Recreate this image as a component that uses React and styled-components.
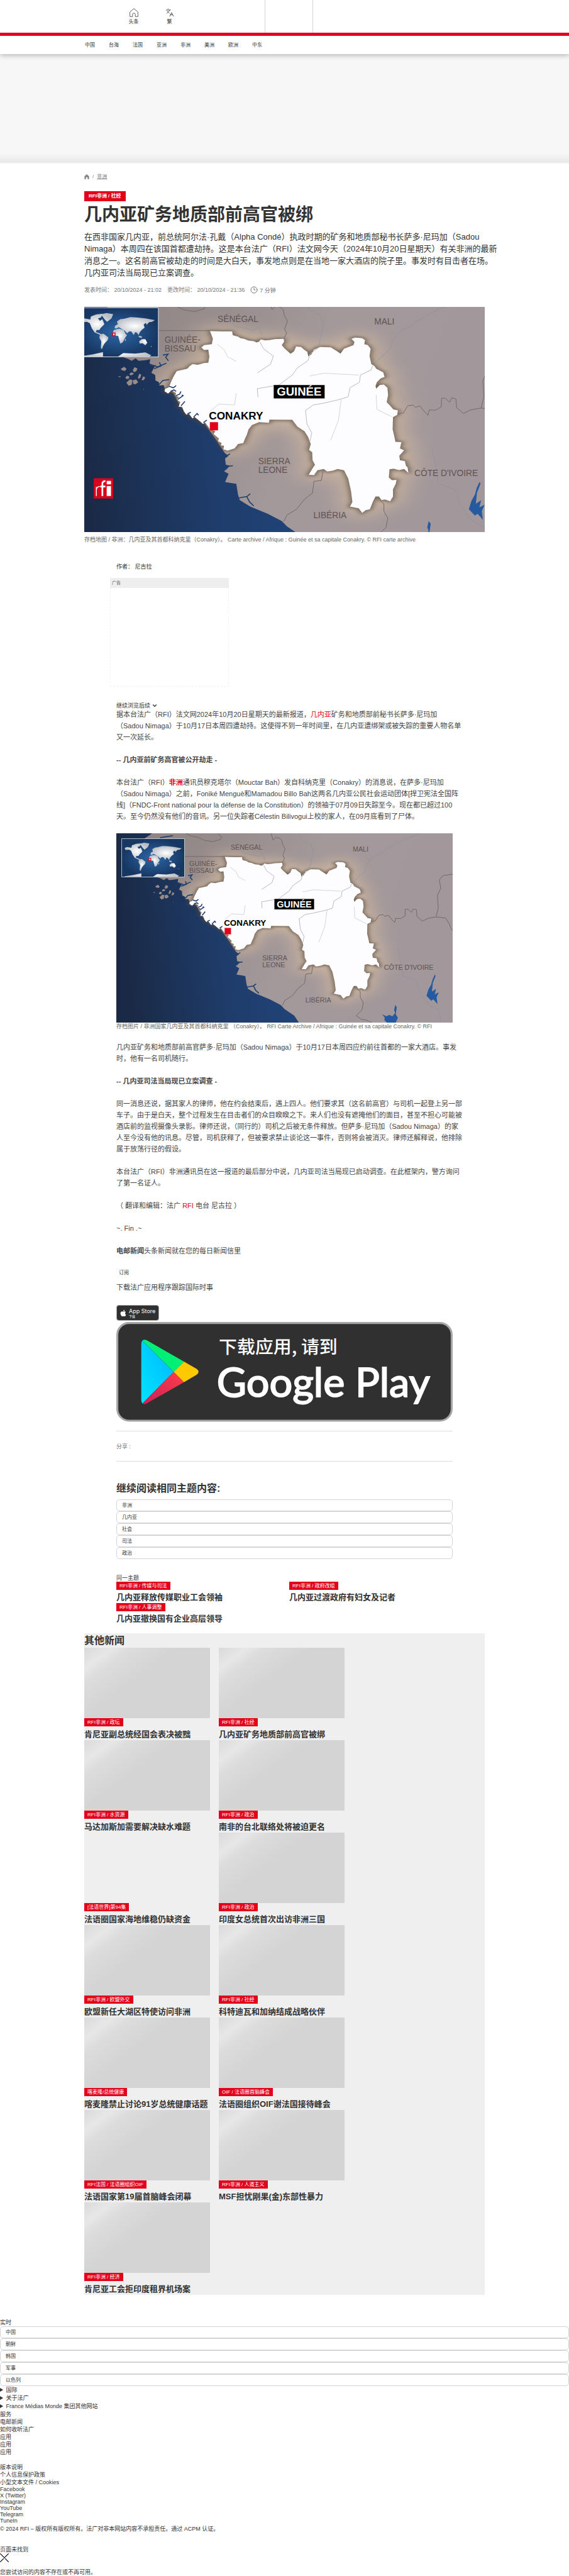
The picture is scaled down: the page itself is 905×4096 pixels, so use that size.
import React from "react";
import styled, { createGlobalStyle } from "styled-components";
import { Languages, Clock3, ChevronDown } from "lucide-react";
import { FaApple } from "react-icons/fa";

const GlobalStyle = createGlobalStyle`
  *, *::before, *::after { box-sizing: border-box; }
  body {
    margin: 0;
    background: #fff;
    color: #333;
    font-family: "Liberation Sans", "Noto Sans CJK SC", sans-serif;
    font-size: 9px;
    line-height: 12px;
    overflow-x: hidden;
  }
  h1, h2, h3, p, ul, figure { margin: 0; padding: 0; }
  ul { list-style: none; }
  a { color: inherit; text-decoration: none; }
  button { font-family: inherit; color: inherit; background: none; border: 0; padding: 0; cursor: pointer; }
`;

const RED = "#e2001a";

const Container = styled.div`
  max-width: 637px;
  margin: 0 auto;
`;

/* ---------- header ---------- */

const Header = styled.header`
  position: relative;
  z-index: 1;
  background: #fff;
  box-shadow: 0 2px 8px rgba(0, 0, 0, 0.28);
`;

const TopBar = styled.div`
  border-bottom: 5px solid ${RED};
`;

const TopInner = styled(Container)`
  display: grid;
  grid-template-columns: 287px 77px 1fr;
  height: 52px;
`;

const Shortcuts = styled.nav`
  display: flex;
  padding: 13px 0 0 50px;
`;

const Shortcut = styled.a`
  width: 57px;
  display: flex;
  flex-direction: column;
  align-items: center;
  gap: 2px;
  font-size: 8px;
  svg { display: block; }
`;

const PlayerSlot = styled.div`
  border: solid #d4d4d4;
  border-width: 0 1px;
`;

const SectionNav = styled(Container).attrs({ as: "nav" })`
  display: flex;
  align-items: center;
  gap: 22px;
  height: 29px;
  padding-left: 1px;
  font-size: 8px;
`;

const AdBanner = styled.div`
  height: 175px;
  background: linear-gradient(#f7f7f7, #f7f7f7 158px, #e9e9e9 172px, #fff);
`;

/* ---------- article head ---------- */

const Breadcrumb = styled.nav`
  display: flex;
  align-items: center;
  gap: 5px;
  padding-top: 14px;
  font-size: 8px;
  color: #777;
  a:last-child { text-decoration: underline; }
  svg { display: block; }
`;

const Tag = styled.a`
  display: block;
  width: fit-content;
  background: ${RED};
  color: #fff;
  font-size: 8px;
  line-height: 13px;
  padding: 0 5px;
  white-space: nowrap;
`;

const HeadTag = styled(Tag)`
  margin-top: 17px;
  padding: 0 7px;
  line-height: 16px;
  font-weight: 700;
`;

const Title = styled.h1`
  margin-top: 5px;
  font-size: 28px;
  line-height: 34px;
`;

const Lead = styled.p`
  margin: 8px -21px 0 0;
  font-size: 13px;
  line-height: 19px;
`;

const Meta = styled.div`
  display: flex;
  align-items: center;
  gap: 9px;
  margin-top: 11px;
  font-size: 9px;
  line-height: 14px;
  color: #777;
`;

const ReadingTime = styled.span`
  display: flex;
  align-items: flex-end;
  gap: 3px;
  line-height: 10px;
`;

const HeroFigure = styled.figure`
  margin-top: 20px;
  figcaption { margin-top: 6px; color: #666; }
`;

const BodyFigure = styled.figure`
  margin-top: 18px;
  figcaption { color: #666; white-space: nowrap; }
`;

const MapSvg = styled.svg`
  display: block;
  width: 100%;
  aspect-ratio: 16 / 9;
  font-family: "Liberation Sans", sans-serif;
`;

/* ---------- article body ---------- */

const Article = styled.div`
  margin: 31px 51px 0;
`;

const AdBox = styled.aside`
  width: 189px;
  height: 173px;
  margin: 12px 0 25px -10px;
  border: 1px dashed #f3f3f3;
`;

const AdLabel = styled.div`
  margin: -1px;
  padding: 2px 3px 0;
  height: 16px;
  background: #eee;
  font-size: 7px;
  color: #666;
`;

const ReadOn = styled.button`
  display: flex;
  align-items: center;
  gap: 2px;
  font-size: 9px;
  line-height: 10px;
`;

const Para = styled.p`
  margin: ${(p) => (p.$first ? "0" : "18px")} -17px 0 0;
  font-size: 11px;
  line-height: 18px;
  color: #444;
`;

const InlineLink = styled.a`
  color: ${RED};
`;

const Subscribe = styled.button`
  display: block;
  margin-top: 20px;
  padding: 0 4px;
  font-size: 8px;
  line-height: 12px;
`;

const AppText = styled(Para)`
  margin-top: 8px;
`;

const AppStoreLink = styled.a`
  width: 68px;
  height: 25px;
  margin-top: 19px;
  padding: 0 4px;
  display: flex;
  align-items: center;
  gap: 3px;
  border: 1px solid #a6a6a6;
  border-radius: 4px;
  background: #303030;
  color: #fff;
  font-family: Inter, "Noto Sans CJK SC", sans-serif;
  font-size: 9px;
  line-height: 10px;
  white-space: nowrap;
  svg { flex: none; }
  small { display: block; font-size: 5px; line-height: 6px; }
`;

const PlayLink = styled.a`
  display: block;
  margin-top: 2px;
  svg { display: block; width: 100%; }
`;

const Share = styled.div`
  margin-top: 14px;
  padding: 18px 0;
  border: solid #ddd;
  border-width: 1px 0;
  color: #777;
  height: 49px;
`;

const SectionTitle = styled.h2`
  font-size: 16px;
  line-height: ${(p) => p.$line || 20}px;
`;

const TopicHeading = styled(SectionTitle)`
  margin: 33px 0 7px;
`;

const Pill = styled.a`
  display: block;
  padding: 0 8px;
  border: 1px solid #d4d4d4;
  border-radius: 5px;
  font-size: 8px;
  line-height: 17px;
`;

const RelatedLabel = styled.p`
  && { margin-top: 24px; }
`;

const RelatedGrid = styled.ul`
  display: grid;
  grid-template-columns: 1fr 1fr;
  column-gap: 15px;
`;

const CardTitle = styled.h3`
  padding-top: ${(p) => p.$pad}px;
  font-size: 13px;
  line-height: 18px;
  white-space: nowrap;
`;

const OtherNews = styled.section`
  margin-top: 14px;
  background: #efefef;
`;

const NewsGrid = styled.ul`
  display: grid;
  grid-template-columns: repeat(2, 200px);
  column-gap: 14px;
`;

const Thumb = styled.div`
  height: 112px;
  background: ${(p) =>
    p.$empty ? "none" : "linear-gradient(143deg, #dadada, #e7e7e7 13%, #dcdcdc 22%, #d4d4d4 42%)"};
`;

/* ---------- footer ---------- */

const Footer = styled.footer`
  margin-top: 38px;
`;

const Fold = styled.details`
  line-height: 13px;
`;

const LinkList = styled.ul`
  margin-top: ${(p) => p.$top || 0}px;
  line-height: ${(p) => p.$line || 12}px;
`;

const Copyright = styled.p`
  && { margin-top: 2px; }
`;

const NotFound = styled.section`
  margin-top: 21px;
  button { display: block; height: 14px; }
  button svg { display: block; }
  p:last-child { margin-top: 11px; line-height: 10px; }
`;

/* ---------- drawings ---------- */

function GuineaMap({ id, viewBox, logo }) {
  const guinea =
    "M565 248L600 250L628 250L630 270L645 278L652 287L662 290L675 300L690 303L698 310L705 306L710 294L722 299L735 297L750 292L775 290L777 305L770 325L779 345L785 355L795 373L805 360L811 333L825 335L835 352L843 362L846 387L855 375L862 350L880 335L910 337L925 355L938 372L948 345L975 325L978 308L969 290L980 283L1000 287L1008 297L1006 320L1016 325L1024 345L1021 385L1026 430L1035 440L1040 455L1060 475L1064 500L1052 510L1042 530L1038 550L1040 565L1050 545L1062 543L1072 560L1074 600L1070 640L1080 660L1089 680L1102 685L1100 710L1088 722L1087 790L1092 830L1095 858L1112 860L1108 895L1120 905L1106 935L1108 960L1122 965L1125 990L1130 1000L1132 1030L1120 1008L1105 1014L1090 1006L1078 1010L1076 1055L1085 1070L1098 1068L1096 1090L1088 1120L1088 1160L1080 1186L1065 1176L1055 1179L1048 1160L1038 1160L1030 1190L1022 1230L1010 1235L1000 1250L990 1225L965 1215L972 1190L968 1130L960 1060L948 1015L930 1008L915 1018L900 1022L890 1008L872 1015L862 1042L847 1040L858 1005L865 985L858 960L857 915L848 903L853 870L845 830L835 800L815 775L800 737L735 736L733 753L705 750L685 765L675 790L670 820L665 840L660 865L645 870L635 895L615 907L603 900L605 880L596 878L598 865L588 855L590 840L575 815L580 800L565 788L550 750L545 760L530 735L520 720L515 730L505 705L497 708L490 690L485 665L475 665L480 640L470 625L476 610L465 605L468 590L455 575L445 592L435 580L436 567L447 558L455 520L463 490L470 468L485 462L500 455L507 440L515 430L530 433L548 424L560 422L563 390L560 350L548 352L540 338L548 325L570 320L573 290Z";
  const sea =
    "M167 81H298L288 95L270 118V392L317 392L330 400L341 412L352 398L361 412L380 408L394 403L392 426L404 440L410 432L402 459L397 478L408 490L409 520L419 530L419 548L432 545L436 567L460 590L470 625L480 665L505 705L550 760L565 800L580 840L600 900L607 920L618 935L608 950L610 985L622 990L612 1010L605 1020L618 1035L608 1080L625 1085L640 1090L645 1150L650 1180L680 1215L730 1255L770 1295L785 1325L820 1370L837 1420H167Z";
  return (
    <MapSvg viewBox={viewBox} preserveAspectRatio="none" role="img" aria-label="Guinée">
      <defs>
        <linearGradient id={`${id}-sea`} x1="0" y1="0.1" x2="1" y2="0">
          <stop offset="0" stopColor="#1a2a46" />
          <stop offset="0.55" stopColor="#1f3d6c" />
          <stop offset="1" stopColor="#21457a" />
        </linearGradient>
        <linearGradient id={`${id}-land`} x1="0" y1="0" x2="1" y2="0.2">
          <stop offset="0" stopColor="#8b807e" />
          <stop offset="0.6" stopColor="#a3989a" />
          <stop offset="1" stopColor="#a2979b" />
        </linearGradient>
        <radialGradient id={`${id}-world`}>
          <stop offset="0" stopColor="#2c68a8" />
          <stop offset="1" stopColor="#173763" />
        </radialGradient>
        <radialGradient id={`${id}-cont`}>
          <stop offset="0" stopColor="#fff" />
          <stop offset="1" stopColor="#b9bfc6" />
        </radialGradient>
        <filter id={`${id}-glow`} x="-30%" y="-30%" width="160%" height="160%">
          <feGaussianBlur stdDeviation="38" />
        </filter>
        <filter id={`${id}-edge`} x="-10%" y="-10%" width="120%" height="120%">
          <feGaussianBlur stdDeviation="8" />
        </filter>
        <clipPath id={`${id}-box`}>
          <rect x="41" y="41" width="476" height="290" />
        </clipPath>
      </defs>
      <rect width="1000" height="563" fill={`url(#${id}-land)`} />
      <g transform="scale(.8104 .4201) translate(-167 -81)">
        <path d={guinea} fill="#cfb89f" stroke="#cfb89f" strokeWidth="50" filter={`url(#${id}-glow)`} opacity="0.9" />
        <path d={sea} fill={`url(#${id}-sea)`} />
        <path d={guinea} fill="#54483f" stroke="#54483f" strokeWidth="12" filter={`url(#${id}-edge)`} opacity="0.7" />
        <path d={guinea} fill="#fdfcfe" />
        <g fill="none" stroke="#75696a" strokeWidth="1" strokeLinejoin="round">
          <path vectorEffect="non-scaling-stroke" d="M418 245H565M423 81L440 100L470 112L490 130L520 140L548 125L553 105L540 85M735 81L742 130L752 110L765 115L774 130L778 165L786 190L783 210L778 235L784 260L776 290" />
          <path vectorEffect="non-scaling-stroke" d="M1102 706L1118 698L1130 660L1145 655L1152 668L1165 660L1175 685L1188 712L1192 682L1210 684L1226 665L1227 618L1238 618L1250 640L1256 615L1268 622L1270 670L1290 702L1310 682L1340 672L1375 680L1388 720L1393 745L1401 770M1340 672L1348 610L1345 520L1357 470L1352 410L1365 380L1401 370" />
          <path vectorEffect="non-scaling-stroke" d="M888 1020L883 1072L862 1076L858 1140L835 1175L812 1230L785 1262L776 1297M1050 1180L1062 1200L1062 1240L1073 1280L1068 1330L1047 1370L1065 1395L1085 1402L1105 1420" />
        </g>
        <g fill="none" stroke="#8d929c" strokeWidth="1" opacity="0.7">
          <path vectorEffect="non-scaling-stroke" d="M1280 81L1260 100L1225 122L1180 165L1160 190L1135 225L1110 245L1090 290L1078 350L1055 390L1035 430M835 81L850 130L880 160L890 210L880 290L876 330M545 85L580 130L610 145L635 220L690 245L705 225L712 270M1200 890L1210 990L1218 1090L1265 1120L1280 1200L1310 1290L1350 1330L1358 1420" />
        </g>
        <g fill="none" stroke="#b6bcc4" strokeWidth="1">
          <path vectorEffect="non-scaling-stroke" d="M708 308L718 345L735 370L746 385L738 430L700 478M878 335L850 375L845 410L815 450L800 490L762 545L700 565L702 612M1030 440L1025 462L995 490L992 530L965 560L960 610L935 625L890 645L860 655L838 685L842 760L856 810L850 860" />
          <path vectorEffect="non-scaling-stroke" opacity="0.6" d="M585 320L605 350L615 390L640 415M850 495L890 480L990 490M940 625L932 740L910 850M565 690L590 650L635 655L640 590M1040 600L1042 680L1085 720" />
        </g>
        <g fill="none" stroke="#203f6d" strokeWidth="1.6">
          <path vectorEffect="non-scaling-stroke" d="M448 552L460 560L468 548M452 580L462 572L468 580M466 605L478 595L482 580M472 625L488 604L484 600M482 660L493 635M500 705L510 695M518 722L528 702L532 712M546 752L556 738M392 430L415 445L440 425M405 455L425 440L420 420M430 380L445 375L438 392L446 412M418 545L430 520L448 515M612 935L622 925M610 995L630 990M640 1170L670 1160L680 1145M670 1160L678 1190L690 1212M327 112L350 105L375 98" />
        </g>
        <g fill="#265aa0">
          <path d="M1336 1078L1328 1110L1322 1150L1312 1185L1305 1230L1322 1265L1330 1255L1345 1288L1342 1240L1350 1205L1335 1220L1340 1180L1325 1200L1328 1140L1338 1090Z" />
          <path d="M1190 1295L1186 1330L1190 1350L1180 1375L1168 1365L1158 1375L1142 1360L1152 1385L1150 1400L1160 1420H1192L1200 1385L1192 1360L1196 1310Z" />
        </g>
      </g>
      <g transform="scale(.392)">
        <path fill="#978b89" d="M295 402l20-12 14 12-8 12-20-4zM322 452l12-10 12 6-4 12-14 2zM345 432l14-10 14 8-10 8-12 2zM366 410l10-18 18 8-6 14-14 8zM396 455l8-24 12 4-4 16-10 10zM418 470l8-24 14 6-8 16zM328 484l20-20 16 4-4 28-18 6zM366 470l20-6 12 18-18 12-12-4zM282 445h12v5h-12zM428 520l5 2-3 4z" />
        <g clipPath={`url(#${id}-box)`}>
          <rect x="41" y="41" width="478" height="291" fill={`url(#${id}-world)`} />
          <g fill={`url(#${id}-cont)`}>
            <path d="M62 112L80 104L115 110L118 92L150 80L188 76L178 98L160 104L172 118L186 108L198 138L186 150L176 160L168 172L152 172L148 184L170 192L182 198L176 202L140 186L124 162L112 132L96 124L70 126ZM178 80L210 72L250 78L240 104L214 124L202 112Z" />
            <path d="M172 200L192 194L222 216L218 232L200 250L190 268L184 286L177 278L180 240L168 218Z" />
            <path d="M254 172L284 164L312 172L324 196L332 202L318 222L306 246L292 252L286 232L280 208L258 206L246 192ZM318 228l8-4-4 16z" />
            <path d="M258 160L262 146L278 138L272 122L292 108L312 106L352 96L388 98L440 104L496 114L480 124L462 126L448 142L444 130L430 140L436 158L420 170L408 184L400 202L390 188L380 184L372 202L358 182L346 180L332 192L318 176L300 166L284 156L266 164Z" />
            <path d="M404 238L420 226L440 226L452 248L440 262L424 250L406 252ZM400 206l20 4-2 10-16-6zM470 272l8-8-2 8z" />
            <path d="M62 326L130 316L190 302V330H62ZM280 328L310 308L380 312L440 304L476 322L460 332H290Z" />
          </g>
        </g>
        <rect x="41" y="41" width="476" height="290" fill="none" stroke="#ccd3da" strokeWidth="4" />
        <rect x="247" y="190" width="14" height="16" fill="#fff" stroke="#e2001a" strokeWidth="6" />
      </g>
      <g fill="#5f5453" fontSize="20">
        <text x="340" y="49">SÉNÉGAL</text>
        <text x="703" y="55">MALI</text>
        <text x="217" y="97">GUINÉE-</text>
        <text x="217" y="117">BISSAU</text>
        <text x="434" y="378">SIERRA</text>
        <text x="434" y="398">LEONE</text>
        <text x="562" y="503">LIBÉRIA</text>
        <text x="796" y="406">CÔTE D'IVOIRE</text>
      </g>
      <rect x="470" y="195" width="118" height="31" fill="#000" />
      <text x="529" y="220" fontSize="27" fontWeight="700" fill="#fff" textAnchor="middle">GUINÉE</text>
      <text x="320" y="275" fontSize="25" fontWeight="700" fill="#000">CONAKRY</text>
      <rect x="322" y="281" width="19" height="19" fill="#e2001a" />
      {logo && (
        <g>
          <rect x="53" y="411" width="45" height="47" fill="#d8061c" />
          <path d="M59 452V431M59 438Q60 430 67 430" stroke="#fff" strokeWidth="2" fill="none" />
          <path d="M73 452V424Q73 417 80 418M68 430H80" stroke="#fff" strokeWidth="4" fill="none" />
          <rect x="83" y="417" width="10" height="8" fill="#fff" />
          <rect x="83" y="429" width="10" height="23" fill="#fff" />
        </g>
      )}
    </MapSvg>
  );
}

function PlayBadge() {
  return (
    <svg viewBox="0 0 850 252" role="img" aria-label="Google Play">
      <defs>
        <linearGradient id="play-blue" x1="1" y1="0" x2="0" y2="1">
          <stop offset="0" stopColor="#00b4ff" />
          <stop offset="1" stopColor="#00e5ff" />
        </linearGradient>
        <linearGradient id="play-red" x1="1" y1="0" x2="0" y2="1">
          <stop offset="0" stopColor="#ff3d47" />
          <stop offset="1" stopColor="#c8215a" />
        </linearGradient>
      </defs>
      <rect x="2.5" y="2.5" width="845" height="247" rx="30" fill="#303030" stroke="#a6a6a6" strokeWidth="5" />
      <path d="M66 47Q63 50 63 57V196Q63 203 66 206L145 126Z" fill="url(#play-blue)" />
      <path d="M171 100L78 47Q71 43 66 47L145 126Z" fill="#00f076" />
      <path d="M171 152L78 205Q71 210 66 206L145 126Z" fill="url(#play-red)" />
      <path d="M171 100L202 118Q214 126 202 134L171 152L145 126Z" fill="#ffc900" />
      <text x="259" y="80" fontSize="46" fontWeight="500" fill="#fff" fontFamily='"Noto Sans CJK SC", sans-serif'>
        下载应用, 请到
      </text>
      <text x="254" y="189" fontSize="103" fill="#fff" stroke="#fff" strokeWidth="3" fontFamily="Lato, sans-serif">
        Google Play
      </text>
    </svg>
  );
}

function HomeOutline() {
  return (
    <svg width="14" height="14" viewBox="0 0 22 22" fill="none" stroke="#333" strokeWidth="1.2">
      <path d="M1 9.500L11 1L21 9.500V21H14.500V15Q14.500 12.500 11 12.500T7.500 15V21H1Z" strokeLinejoin="round" />
    </svg>
  );
}

function CloseCross() {
  return (
    <svg width="14" height="14" viewBox="0 0 22 22" stroke="#000" strokeWidth="1.8" strokeLinecap="round">
      <path d="M1 1L21 21M21 1L1 21" />
    </svg>
  );
}

/* ---------- content ---------- */

const sections = ["中国", "台海", "法国", "亚洲", "非洲", "美洲", "欧洲", "中东"];
const topics = ["非洲", "几内亚", "社会", "司法", "政治"];
const live = ["中国", "朝鲜", "韩国", "军事", "以色列"];

const related = [
  ["RFI非洲 / 传媒与司法", "几内亚释放传媒职业工会领袖"],
  ["RFI非洲 / 政府改组", "几内亚过渡政府有妇女及记者"],
  ["RFI非洲 / 人事调整", "几内亚撤换国有企业高层领导"],
];

const news = [
  ["RFI非洲 / 政坛", "肯尼亚副总统经国会表决被黜"],
  ["RFI非洲 / 社经", "几内亚矿务地质部前高官被绑"],
  ["RFI非洲 / 水资源", "马达加斯加需要解决缺水难题"],
  ["RFI非洲 / 政治", "南非的台北联络处将被迫更名"],
  ["[法语世界]第94集", "法语圈国家海地维稳仍缺资金", true],
  ["RFI非洲 / 政治", "印度女总统首次出访非洲三国"],
  ["RFI非洲 / 欧盟外交", "欧盟新任大湖区特使访问非洲"],
  ["RFI非洲 / 社经", "科特迪瓦和加纳结成战略伙伴"],
  ["喀麦隆/总统健康", "喀麦隆禁止讨论91岁总统健康话题"],
  ["OIF / 法语圈首脑峰会", "法语圈组织OIF谢法国接待峰会"],
  ["RFI法国 / 法语圈组织OIF", "法语国家第19届首脑峰会闭幕"],
  ["RFI非洲 / 人道主义", "MSF担忧刚果(金)东部性暴力"],
  ["RFI非洲 / 经济", "肯尼亚工会拒印度租界机场案"],
];

const services = ["服务", "电邮新闻", "如何收听法广", "应用", "应用", "应用"];
const legal = ["版本说明", "个人信息保护政策", "小型文本文件 / Cookies"];
const social = ["Facebook", "X (Twitter)", "Instagram", "YouTube", "Telegram", "TuneIn"];

const Links = ({ items, ...rest }) => (
  <LinkList {...rest}>
    {items.map((t, i) => (
      <li key={i}><a href="#">{t}</a></li>
    ))}
  </LinkList>
);

const Pills = ({ items }) => (
  <ul>
    {items.map((t) => (
      <li key={t}><Pill href="#">{t}</Pill></li>
    ))}
  </ul>
);

export default function App() {
  return (
    <div lang="zh-CN">
      <GlobalStyle />
      <Header>
        <TopBar>
          <TopInner>
            <Shortcuts>
              <Shortcut href="#"><HomeOutline />头条</Shortcut>
              <Shortcut href="#"><Languages size={14} strokeWidth={1.4} />繁</Shortcut>
            </Shortcuts>
            <PlayerSlot />
          </TopInner>
        </TopBar>
        <SectionNav>
          {sections.map((s) => <a href="#" key={s}>{s}</a>)}
        </SectionNav>
      </Header>
      <AdBanner />

      <Container as="main">
        <Breadcrumb>
          <a href="#" aria-label="首页">
            <svg width="8" height="8" viewBox="0 0 11 12" fill="#888"><path d="M5.500 0L11 5V12H7.500V7.500H3.500V12H0V5Z" /></svg>
          </a>
          <span>/</span>
          <a href="#">非洲</a>
        </Breadcrumb>
        <HeadTag href="#">RFI非洲 / 社经</HeadTag>
        <Title>几内亚矿务地质部前高官被绑</Title>
        <Lead>
          在西非国家几内亚，前总统阿尔法·孔戴（Alpha Condé）执政时期的矿务和地质部秘书长萨多·尼玛加（Sadou Nimaga）本周四在该国首都遭劫持。这是本台法广（RFI）法文网今天（2024年10月20日星期天）有关非洲的最新消息之一。这名前高官被劫走的时间是大白天，事发地点则是在当地一家大酒店的院子里。事发时有目击者在场。几内亚司法当局现已立案调查。
        </Lead>
        <Meta>
          <span>发表时间： 20/10/2024 - 21:02</span>
          <span>更改时间： 20/10/2024 - 21:36</span>
          <ReadingTime><Clock3 size={12} strokeWidth={2} />7 分钟</ReadingTime>
        </Meta>
        <HeroFigure>
          <GuineaMap id="hero" viewBox="31 14 928 522" logo />
          <figcaption>
            存档地图 / 非洲：几内亚及其首都科纳克里（Conakry）。 Carte archive / Afrique : Guinée et sa capitale Conakry. © RFI carte archive
          </figcaption>
        </HeroFigure>

        <Article>
          <div>作者： 尼古拉</div>
          <AdBox><AdLabel>广告</AdLabel></AdBox>
          <ReadOn type="button">继续浏览后续<ChevronDown size={10} strokeWidth={3} /></ReadOn>
          <Para $first>
            据本台法广（RFI）法文网2024年10月20日星期天的最新报道，<InlineLink href="#">几内亚</InlineLink>矿务和地质部前秘书长萨多·尼玛加（Sadou Nimaga）于10月17日本周四遭劫持。这使得不到一年时间里，在几内亚遭绑架或被失踪的重要人物名单又一次延长。
          </Para>
          <Para><strong>-- 几内亚前矿务高官被公开劫走 -</strong></Para>
          <Para>
            本台法广（RFI）<InlineLink href="#"><strong>非洲</strong></InlineLink>通讯员穆克塔尔（Mouctar Bah）发自科纳克里（Conakry）的消息说，在萨多·尼玛加（Sadou Nimaga）之前，Foniké Menguè和Mamadou Billo Bah这两名几内亚公民社会运动团体[捍卫宪法全国阵线]（FNDC-Front national pour la défense de la Constitution）的领袖于07月09日失踪至今。现在都已超过100天。至今仍然没有他们的音讯。另一位失踪者Célestin Bilivogui上校的家人，在09月底看到了尸体。
          </Para>
          <BodyFigure>
            <GuineaMap id="inline" viewBox="0 0 1000 562" />
            <figcaption>
              存档图片 / 非洲国家几内亚及其首都科纳克里 （Conakry）。 RFI Carte Archive / Afrique : Guinée et sa capitale Conakry. © RFI
            </figcaption>
          </BodyFigure>
          <Para>
            几内亚矿务和地质部前高官萨多·尼玛加（Sadou Nimaga）于10月17日本周四应约前往首都的一家大酒店。事发时，他有一名司机随行。
          </Para>
          <Para><strong>-- 几内亚司法当局现已立案调查 -</strong></Para>
          <Para>
            同一消息还说，据其家人的律师，他在约会结束后，遇上四人。他们要求其（这名前高官）与司机一起登上另一部车子。由于是白天，整个过程发生在目击者们的众目睽睽之下。来人们也没有遮掩他们的面目，甚至不担心可能被酒店前的监视摄像头录影。律师还说，（同行的）司机之后被无条件释放。但萨多·尼玛加（Sadou Nimaga）的家人至今没有他的讯息。尽管，司机获释了，但被要求禁止谈论这一事件，否则将会被消灭。律师还解释说，他排除属于放荡行径的假设。
          </Para>
          <Para>
            本台法广（RFI）非洲通讯员在这一报道的最后部分中说，几内亚司法当局现已启动调查。在此框架内，警方询问了第一名证人。
          </Para>
          <Para>（ 翻译和编辑：法广 <InlineLink href="#">RFI</InlineLink> 电台 尼古拉 ）</Para>
          <Para>~. Fin .~</Para>
          <Para><strong>电邮新闻</strong>头条新闻就在您的每日新闻信里</Para>
          <Subscribe type="button">订阅</Subscribe>
          <AppText>下载法广应用程序跟踪国际时事</AppText>
          <AppStoreLink href="#">
            <FaApple size={12} />
            <span>App Store<small>下载</small></span>
          </AppStoreLink>
          <PlayLink href="#"><PlayBadge /></PlayLink>
          <Share>分享 :</Share>

          <TopicHeading>继续阅读相同主题内容:</TopicHeading>
          <Pills items={topics} />

          <RelatedLabel>同一主题</RelatedLabel>
          <RelatedGrid>
            {related.map(([tag, title]) => (
              <li key={title}>
                <Tag href="#">{tag}</Tag>
                <CardTitle $pad={3}><a href="#">{title}</a></CardTitle>
              </li>
            ))}
          </RelatedGrid>
        </Article>

        <OtherNews>
          <SectionTitle $line={23}>其他新闻</SectionTitle>
          <NewsGrid>
            {news.map(([tag, title, empty]) => (
              <li key={title}>
                <Thumb $empty={empty} />
                <Tag href="#">{tag}</Tag>
                <CardTitle $pad={4}><a href="#">{title}</a></CardTitle>
              </li>
            ))}
          </NewsGrid>
        </OtherNews>
      </Container>

      <Footer>
        <div>实时</div>
        <Pills items={live} />
        <Fold><summary>国际</summary></Fold>
        <Fold><summary>关于法广</summary></Fold>
        <Fold><summary>France Médias Monde 集团其他网站</summary></Fold>
        <Links items={services} />
        <Links items={legal} $top={12} />
        <Links items={social} $line={10} />
        <Copyright>© 2024 RFI – 版权所有版权所有。法广对非本网站内容不承担责任。通过 ACPM 认证。</Copyright>
        <NotFound>
          <p>页面未找到</p>
          <button type="button" aria-label="关闭"><CloseCross /></button>
          <p>您尝试访问的内容不存在或不再可用。</p>
        </NotFound>
      </Footer>
    </div>
  );
}
